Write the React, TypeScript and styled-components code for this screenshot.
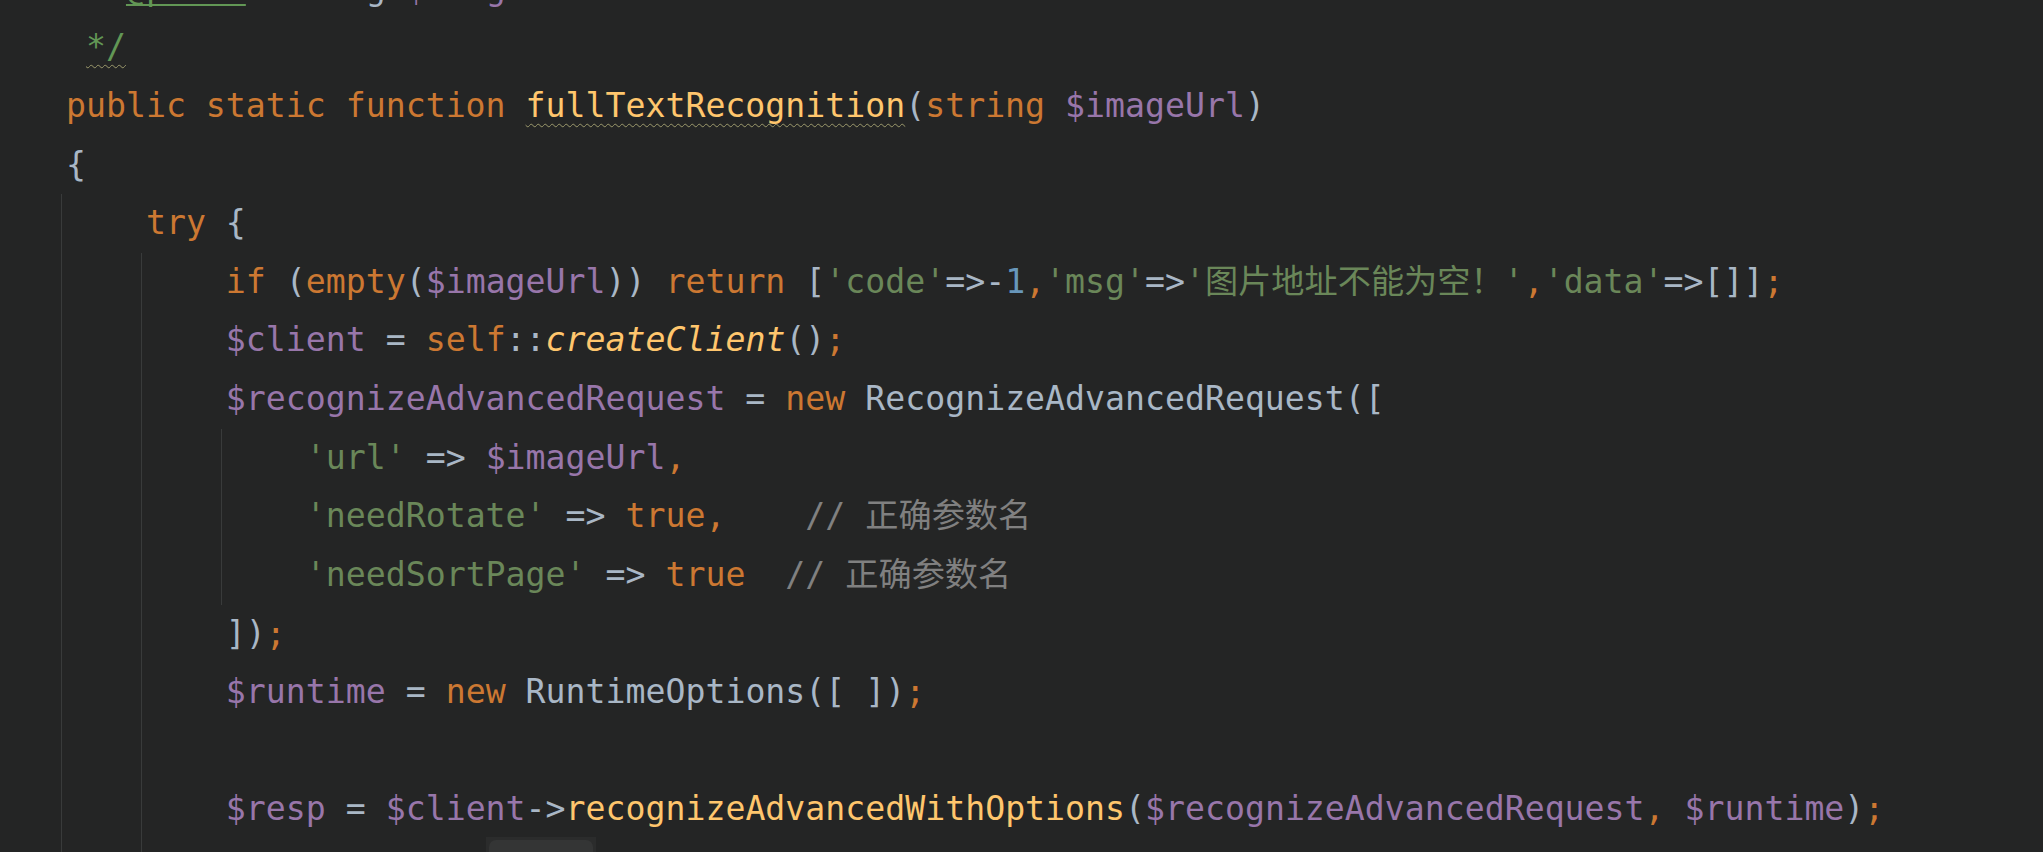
import React from "react";
import styled, { createGlobalStyle, css } from "styled-components";

const Global = createGlobalStyle`
  html, body {
    margin: 0;
    padding: 0;
    background: #242525;
    overflow: hidden;
  }
  #root {
    height: 852px;
    overflow: hidden;
  }
`;

const PALETTE = {
  kw: "#CC7832",
  fn: "#FFC66D",
  v: "#9876AA",
  s: "#6A8759",
  n: "#6897BB",
  t: "#A9B7C6",
  c: "#808080",
  doc: "#629755",
} as const;

type Kind = keyof typeof PALETTE;

const Editor = styled.div`
  font-family: "DejaVu Sans Mono", "Noto Sans CJK SC", monospace;
  font-size: 33.2px;
  padding-left: 66px;
  margin-top: -40.3px;
  color: ${PALETTE.t};
`;

const Scope = styled.div<{ $col: number }>`
  position: relative;
  &::before {
    content: "";
    position: absolute;
    top: 0;
    bottom: 0;
    left: calc(${(p) => p.$col}ch - 5px);
    width: 1px;
    background: #393b3b;
  }
`;

const Line = styled.div`
  height: 58.63px;
  line-height: 58.63px;
  white-space: pre;
`;

const Tok = styled.span<{ $k: Kind; $italic?: boolean; $wavy?: boolean; $under?: boolean }>`
  color: ${(p) => PALETTE[p.$k]};
  font-style: ${(p) => (p.$italic ? "italic" : "normal")};
  ${(p) =>
    p.$wavy &&
    css`
      text-decoration: underline wavy #9c9a6c;
      text-decoration-thickness: 1px;
      text-underline-offset: 6px;
      text-decoration-skip-ink: none;
    `}
  ${(p) =>
    p.$under &&
    css`
      text-decoration: underline solid ${PALETTE.doc};
      text-decoration-thickness: 2px;
      text-underline-offset: 4px;
      text-decoration-skip-ink: none;
    `}
`;

const CjkComment = styled.span`
  color: ${PALETTE.c};
  font-family: "DejaVu Sans Mono", "Noto Sans CJK SC", monospace;
`;

const Hint = styled.span`
  display: inline-block;
  vertical-align: top;
  margin-top: -2px;
  height: 46px;
  width: 110px;
  box-sizing: border-box;
  padding: 3px 3px 0;
  background: #2b2c2c;
`;

const HintLabel = styled.span`
  display: block;
  height: 100%;
  border-radius: 7px;
  background: #343535;
  color: #8a8c8c;
  font-size: 24px;
  line-height: 64px;
  text-align: center;
`;

const T = (k: Kind, text: string, extra: { i?: boolean; w?: boolean; u?: boolean } = {}) => (
  <Tok $k={k} $italic={extra.i} $wavy={extra.w} $under={extra.u}>
    {text}
  </Tok>
);

export default function App() {
  return (
    <>
      <Global />
      <Editor>
        <Line>
          {T("doc", " * ")}
          {T("doc", "@param", { u: true })}
          {T("t", " string ")}
          {T("v", "$imageUrl")}
        </Line>
        <Line>
          {T("doc", " ")}
          {T("doc", "*/", { w: true })}
        </Line>
        <Line>
          {T("kw", "public static function")}
          {T("t", " ")}
          {T("fn", "fullTextRecognition", { w: true })}
          {T("t", "(")}
          {T("kw", "string")}
          {T("t", " ")}
          {T("v", "$imageUrl")}
          {T("t", ")")}
        </Line>
        <Line>{T("t", "{")}</Line>
        <Scope $col={0}>
          <Line>
            {T("t", "    ")}
            {T("kw", "try")}
            {T("t", " {")}
          </Line>
          <Scope $col={4}>
            <Line>
              {T("t", "        ")}
              {T("kw", "if")}
              {T("t", " (")}
              {T("kw", "empty")}
              {T("t", "(")}
              {T("v", "$imageUrl")}
              {T("t", ")) ")}
              {T("kw", "return")}
              {T("t", " [")}
              {T("s", "'code'")}
              {T("t", "=>-")}
              {T("n", "1")}
              {T("kw", ",")}
              {T("s", "'msg'")}
              {T("t", "=>")}
              {T("s", "'图片地址不能为空！'")}
              {T("kw", ",")}
              {T("s", "'data'")}
              {T("t", "=>[]]")}
              {T("kw", ";")}
            </Line>
            <Line>
              {T("t", "        ")}
              {T("v", "$client")}
              {T("t", " = ")}
              {T("kw", "self")}
              {T("t", "::")}
              {T("fn", "createClient", { i: true })}
              {T("t", "()")}
              {T("kw", ";")}
            </Line>
            <Line>
              {T("t", "        ")}
              {T("v", "$recognizeAdvancedRequest")}
              {T("t", " = ")}
              {T("kw", "new")}
              {T("t", " RecognizeAdvancedRequest([")}
            </Line>
            <Scope $col={8}>
              <Line>
                {T("t", "            ")}
                {T("s", "'url'")}
                {T("t", " => ")}
                {T("v", "$imageUrl")}
                {T("kw", ",")}
              </Line>
              <Line>
                {T("t", "            ")}
                {T("s", "'needRotate'")}
                {T("t", " => ")}
                {T("kw", "true")}
                {T("kw", ",")}
                {T("t", "    ")}
                <CjkComment>// 正确参数名</CjkComment>
              </Line>
              <Line>
                {T("t", "            ")}
                {T("s", "'needSortPage'")}
                {T("t", " => ")}
                {T("kw", "true")}
                {T("t", "  ")}
                <CjkComment>// 正确参数名</CjkComment>
              </Line>
            </Scope>
            <Line>
              {T("t", "        ])")}
              {T("kw", ";")}
            </Line>
            <Line>
              {T("t", "        ")}
              {T("v", "$runtime")}
              {T("t", " = ")}
              {T("kw", "new")}
              {T("t", " RuntimeOptions([ ])")}
              {T("kw", ";")}
            </Line>
            <Line> </Line>
            <Line>
              {T("t", "        ")}
              {T("v", "$resp")}
              {T("t", " = ")}
              {T("v", "$client")}
              {T("t", "->")}
              {T("fn", "recognizeAdvancedWithOptions")}
              {T("t", "(")}
              {T("v", "$recognizeAdvancedRequest")}
              {T("kw", ",")}
              {T("t", " ")}
              {T("v", "$runtime")}
              {T("t", ")")}
              {T("kw", ";")}
            </Line>
            <Line>
              {T("t", "        ")}
              {T("kw", "return")}
              {T("t", " parse(")}
              <Hint>
                <HintLabel>data:</HintLabel>
              </Hint>
              {T("v", "resp ")}
              {T("t", ")")}
              {T("kw", ";")}
            </Line>
          </Scope>
        </Scope>
      </Editor>
    </>
  );
}
